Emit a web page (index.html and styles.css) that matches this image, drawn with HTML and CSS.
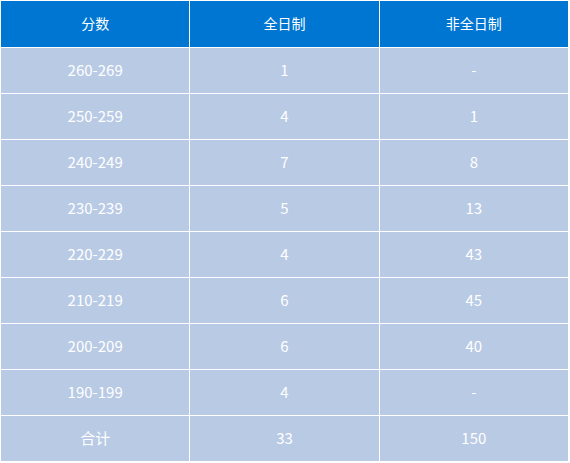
FILE: index.html
```html
<!DOCTYPE html>
<html lang="zh">
<head>
<meta charset="utf-8">
<link rel="stylesheet" href="styles.css">
</head>
<body>
<table class="score-table">
  <thead>
    <tr><th>分数</th><th>全日制</th><th>非全日制</th></tr>
  </thead>
  <tbody>
    <tr><td>260-269</td><td>1</td><td>-</td></tr>
    <tr><td>250-259</td><td>4</td><td>1</td></tr>
    <tr><td>240-249</td><td>7</td><td>8</td></tr>
    <tr><td>230-239</td><td>5</td><td>13</td></tr>
    <tr><td>220-229</td><td>4</td><td>43</td></tr>
    <tr><td>210-219</td><td>6</td><td>45</td></tr>
    <tr><td>200-209</td><td>6</td><td>40</td></tr>
    <tr><td>190-199</td><td>4</td><td>-</td></tr>
    <tr><td>合计</td><td>33</td><td>150</td></tr>
  </tbody>
</table>
</body>
</html>
```
FILE: styles.css
```css
html, body {
  margin: 0;
  padding: 0;
  background: #ffffff;
}
.score-table {
  border-collapse: collapse;
  width: 569px;
  table-layout: fixed;
  font-family: "Noto Sans CJK SC", "Noto Sans", sans-serif;
  font-size: 15px;
  color: #ffffff;
}
.score-table th,
.score-table td {
  border: 1px solid #ffffff;
  text-align: center;
  padding: 0 0 2px;
  font-weight: normal;
}
.score-table th {
  background: #0076d3;
  height: 44px;
  font-size: 14px;
}
.score-table td {
  background: #b9cae5;
  height: 43px;
}
```
